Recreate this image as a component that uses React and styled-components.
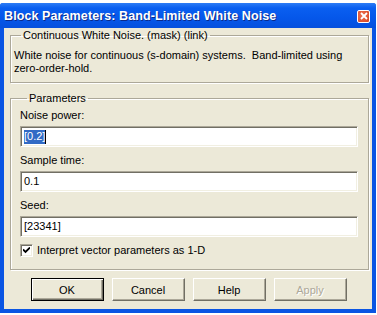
import React from "react";
import styled, { createGlobalStyle } from "styled-components";

const GlobalStyle = createGlobalStyle`
  html, body {
    margin: 0;
    padding: 0;
    background: #ffffff;
  }
  body {
    font-family: "Liberation Sans", Arial, sans-serif;
    font-size: 11px;
    color: #000;
  }
`;

const App = () => {
  return (
    <>
      <GlobalStyle />
      <Page>
        <Window>
          <TitleBar>
            <Title>Block Parameters: Band-Limited White Noise</Title>
            <CloseButton>
              <svg width="8" height="8" viewBox="0 0 8 8">
                <path d="M1 1L7 7M7 1L1 7" stroke="#fff" strokeWidth="1.8" />
              </svg>
            </CloseButton>
          </TitleBar>
          <Body>
            <Group>
              <Legend>Continuous White Noise. (mask) (link)</Legend>
              <Description>
                White noise for continuous (s-domain) systems.&nbsp; Band-limited using
                <br />
                zero-order-hold.
              </Description>
            </Group>
            <Group $params>
              <Legend>Parameters</Legend>
              <Field>
                <Label>Noise power:</Label>
                <Edit>
                  <Selected>[0.2]</Selected>
                  <Caret />
                </Edit>
              </Field>
              <Field>
                <Label>Sample time:</Label>
                <Edit>0.1</Edit>
              </Field>
              <Field>
                <Label>Seed:</Label>
                <Edit>[23341]</Edit>
              </Field>
              <CheckRow>
                <CheckBox>
                  <svg width="7" height="7" viewBox="0 0 7 7">
                    <path d="M0 2.5L2.5 5L7 0.5" stroke="#000" strokeWidth="1.8" fill="none" />
                  </svg>
                </CheckBox>
                <span>Interpret vector parameters as 1-D</span>
              </CheckRow>
            </Group>
            <ButtonRow>
              <Button $default>OK</Button>
              <Button>Cancel</Button>
              <Button>Help</Button>
              <Button $disabled>Apply</Button>
            </ButtonRow>
          </Body>
        </Window>
      </Page>
    </>
  );
};

export default App;

const Page = styled.div`
  width: 377px;
  height: 315px;
  padding-top: 3px;
  box-sizing: border-box;
`;

const Window = styled.div`
  width: 376px;
  height: 310px;
  display: flex;
  flex-direction: column;
  background: #0a55e3;
  border-radius: 3px 3px 0 0;
  overflow: hidden;
`;

const TitleBar = styled.div`
  height: 25px;
  flex: none;
  display: flex;
  align-items: center;
  justify-content: space-between;
  padding: 0 6px 0 4px;
  background: linear-gradient(#2d7cf5 0%, #0a5ff0 20%, #0557ea 60%, #0550dd 100%);
`;

const Title = styled.div`
  color: #fff;
  font-weight: bold;
  font-size: 12.5px;
  letter-spacing: 0.1px;
  text-shadow: 1px 1px 0 #0b2a8a;
  padding-top: 1px;
`;

const CloseButton = styled.div`
  width: 11px;
  height: 11px;
  border: 1px solid #fff;
  border-radius: 2px;
  background: radial-gradient(circle at 40% 40%, #ee7352, #d6431f);
  display: flex;
  align-items: center;
  justify-content: center;
  margin-top: 1px;
`;

const Body = styled.div`
  flex: 1;
  margin: 0 4px 4px 4px;
  background: #ece9d8;
  padding: 1px 3px 0 6px;
  display: flex;
  flex-direction: column;
`;

const Group = styled.fieldset`
  margin: ${(p) => (p.$params ? "9px 0 0 0" : "0")};
  padding: ${(p) => (p.$params ? "4px 10px 12px 9px" : "7px 4px 7px 3px")};
  border: 1px solid #aca899;
  box-shadow: 1px 1px 0 #fff, inset 1px 1px 0 #fff;
  min-width: 0;
`;

const Legend = styled.legend`
  margin-left: 7px;
  padding: 0 2px;
  line-height: 13px;
  font-size: 11px;
`;

const Description = styled.div`
  line-height: 13px;
`;

const Field = styled.div`
  display: flex;
  flex-direction: column;
  gap: 4px;
  margin-bottom: 7px;
`;

const Label = styled.div`
  line-height: 13px;
`;

const Edit = styled.div`
  height: 21px;
  box-sizing: border-box;
  background: #fff;
  border-top: 1px solid #aca899;
  border-left: 1px solid #aca899;
  border-bottom: 1px solid #fff;
  border-right: 1px solid #fff;
  box-shadow: inset 1px 1px 0 #716f64, inset -1px -1px 0 #f1efe2;
  padding: 0 3px;
  display: flex;
  align-items: center;
  line-height: 13px;
`;

const Selected = styled.span`
  background: #316ac5;
  color: #fff;
  padding: 0 0 1px 0;
`;

const Caret = styled.span`
  width: 1px;
  height: 14px;
  background: #000;
`;

const CheckRow = styled.label`
  display: flex;
  align-items: center;
  gap: 4px;
  margin-top: 5px;
  line-height: 13px;
`;

const CheckBox = styled.span`
  width: 13px;
  height: 13px;
  box-sizing: border-box;
  background: #fff;
  border-top: 1px solid #aca899;
  border-left: 1px solid #aca899;
  border-bottom: 1px solid #fff;
  border-right: 1px solid #fff;
  box-shadow: inset 1px 1px 0 #716f64, inset -1px -1px 0 #f1efe2;
  display: flex;
  align-items: center;
  justify-content: center;
`;

const ButtonRow = styled.div`
  display: flex;
  justify-content: center;
  gap: 8px;
  margin-top: 8px;
  padding-right: 2px;
`;

const Button = styled.div`
  width: 73px;
  height: 23px;
  box-sizing: border-box;
  display: flex;
  align-items: center;
  justify-content: center;
  background: #ece9d8;
  border-top: 1px solid ${(p) => (p.$default ? "#000" : "#fff")};
  border-left: 1px solid ${(p) => (p.$default ? "#000" : "#fff")};
  border-right: 1px solid ${(p) => (p.$default ? "#000" : "#716f64")};
  border-bottom: 1px solid ${(p) => (p.$default ? "#000" : "#716f64")};
  box-shadow: ${(p) =>
    p.$default
      ? "inset 1px 1px 0 #fff, inset -1px -1px 0 #716f64, inset -2px -2px 0 #aca899"
      : "inset -1px -1px 0 #aca899"};
  color: ${(p) => (p.$disabled ? "#aca899" : "#000")};
  text-shadow: ${(p) => (p.$disabled ? "1px 1px 0 #fff" : "none")};
`;
